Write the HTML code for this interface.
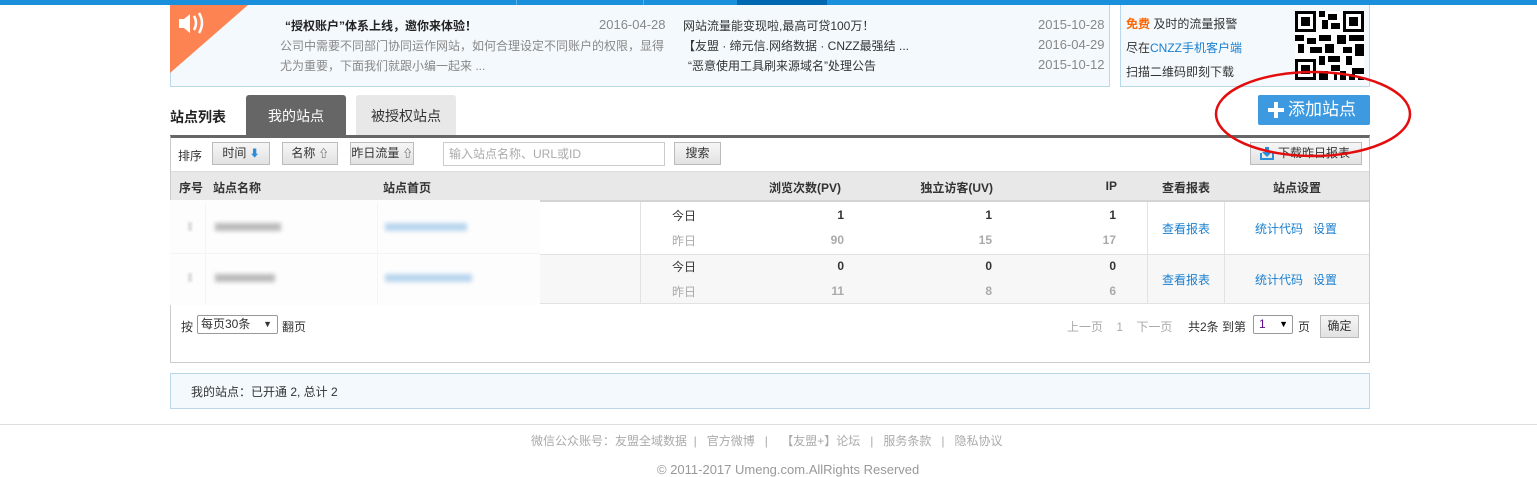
<!DOCTYPE html>
<html><head><meta charset="utf-8"><style>
*{margin:0;padding:0;box-sizing:border-box}
body{width:1537px;height:477px;position:relative;background:#fff;font-family:"Liberation Sans","Noto Sans CJK SC",sans-serif;font-size:12px;color:#333;overflow:hidden}
.a{position:absolute;white-space:nowrap}
.btn{position:absolute;white-space:nowrap;border:1px solid #bbb;background:linear-gradient(#f6f6f6,#e2e2e2);text-align:center;line-height:21px;font-size:12px;color:#333}
.g{color:#888}.b{color:#1a7fcf}.gr{color:#aaa}
.r{text-align:right}
.ar{font-size:10px}
</style></head><body>
<div class="a" style="left:0;top:0;width:1537px;height:5px;background:#1a8fdb"></div>
<div class="a" style="left:737px;top:0;width:90px;height:5px;background:#0068b0"></div>
<div class="a" style="left:516px;top:0;width:1px;height:5px;background:#5ab0e8"></div>
<div class="a" style="left:643px;top:0;width:1px;height:5px;background:#5ab0e8"></div>

<div class="a" style="left:170px;top:5px;width:940px;height:82px;background:#f3f9fd;border:1px solid #b9d8ea;border-top:none"></div>
<svg class="a" style="left:170px;top:5px" width="80" height="70"><polygon points="0,0 78,0 0,68" fill="#fd8452"/><path d="M9 14h5l6-5v19l-6-5H9z" fill="#fff"/><path d="M24 11q4 7 0 14M29 8q6 10 0 20" stroke="#fff" stroke-width="2.5" fill="none"/></svg>
<div class="a" style="left:285px;top:17px;font-weight:bold;color:#222">“授权账户”体系上线，邀你来体验！</div>
<div class="a g" style="left:599px;top:17px;font-size:13px">2016-04-28</div>
<div class="a g" style="left:280px;top:37px">公司中需要不同部门协同运作网站，如何合理设定不同账户的权限，显得</div>
<div class="a g" style="left:280px;top:57px">尤为重要，下面我们就跟小编一起来 ...</div>
<div class="a" style="left:683px;top:17px">网站流量能变现啦,最高可贷100万！</div>
<div class="a" style="left:683px;top:37px">【友盟 · 缔元信.网络数据 · CNZZ最强结 ...</div>
<div class="a" style="left:688px;top:57px">“恶意使用工具刷来源域名”处理公告</div>
<div class="a g" style="left:1038px;top:17px;font-size:13px">2015-10-28</div>
<div class="a g" style="left:1038px;top:37px;font-size:13px">2016-04-29</div>
<div class="a g" style="left:1038px;top:57px;font-size:13px">2015-10-12</div>

<div class="a" style="left:1120px;top:5px;width:250px;height:82px;background:#f3f9fd;border:1px solid #b9d8ea;border-top:none"></div>
<div class="a" style="left:1126px;top:15px"><span style="color:#f60;font-weight:bold">免费</span> 及时的流量报警</div>
<div class="a" style="left:1126px;top:39px">尽在<span class="b">CNZZ手机客户端</span></div>
<div class="a" style="left:1126px;top:63px">扫描二维码即刻下载</div>
<svg class="a" style="left:1295px;top:11px" width="69" height="69" viewBox="0 0 23 23" shape-rendering="crispEdges">
<rect width="23" height="23" fill="#fff"/>
<g fill="#000"><path d="M0 0h7v7H0zM16 0h7v7h-7zM0 16h7v7H0z"/></g>
<g fill="#fff"><path d="M1 1h5v5H1zM17 1h5v5h-5zM1 17h5v5H1z"/></g>
<g fill="#000"><path d="M2 2h3v3H2zM18 2h3v3h-3zM2 18h3v3H2zM8 0h2v2H8zM11 1h3v2h-3zM9 3h2v3H9zM12 4h3v2h-3zM8 8h4v2H8zM0 8h3v2H0zM4 9h3v2H4zM14 8h3v3h-3zM18 8h5v2h-5zM1 11h2v3H1zM5 12h4v2H5zM10 11h3v3h-3zM16 12h3v2h-3zM20 11h3v4h-3zM8 15h2v3H8zM11 15h4v2h-4zM17 15h2v3h-2zM12 18h3v2h-3zM8 20h3v3H8zM15 20h2v3h-2zM19 19h4v2h-4zM18 21h2v2h-2zM21 22h2v1h-2zM13 21h1v2h-1z"/></g>
</svg>

<div class="a" style="left:1258px;top:95px;width:112px;height:30px;background:#3d9ae0;border-radius:2px;color:#fff;font-size:17px;line-height:30px;padding-left:30px">添加站点</div>
<div class="a" style="left:1268px;top:102px;width:16px;height:16px"><div class="a" style="left:6px;top:0;width:4px;height:16px;background:#fff"></div><div class="a" style="left:0;top:6px;width:16px;height:4px;background:#fff"></div></div>

<div class="a" style="left:170px;top:107px;font-size:14px;font-weight:bold;color:#222">站点列表</div>
<div class="a" style="left:246px;top:95px;width:100px;height:40px;background:#666;border-radius:3px 3px 0 0;color:#fff;font-size:14px;text-align:center;line-height:42px">我的站点</div>
<div class="a" style="left:356px;top:95px;width:100px;height:40px;background:#e8e8e8;border-radius:3px 3px 0 0;color:#333;font-size:14px;text-align:center;line-height:42px">被授权站点</div>

<div class="a" style="left:170px;top:135px;width:1200px;height:228px;border:1px solid #ccc;border-top:3px solid #666"></div>
<div class="a" style="left:178px;top:147px">排序</div>
<div class="btn" style="left:212px;top:142px;width:58px;height:23px">时间 <span class="ar" style="color:#2a8fd8">⬇</span></div>
<div class="btn" style="left:282px;top:142px;width:56px;height:23px">名称 <span class="ar">⇧</span></div>
<div class="btn" style="left:350px;top:142px;width:64px;height:23px">昨日流量 <span class="ar">⇧</span></div>
<div class="a" style="left:443px;top:142px;width:222px;height:24px;border:1px solid #ccc;color:#aaa;line-height:22px;padding-left:5px">输入站点名称、URL或ID</div>
<div class="btn" style="left:674px;top:142px;width:47px;height:23px">搜索</div>
<div class="btn" style="left:1250px;top:142px;width:112px;height:23px;padding-left:16px">下载昨日报表</div>
<svg class="a" style="left:1260px;top:146px" width="14" height="14"><path d="M1 7v6h12V7" stroke="#2a8fd8" stroke-width="2" fill="none"/><path d="M5 1h4v5h3l-5 5-5-5h3z" fill="#2a8fd8"/></svg>

<div class="a" style="left:171px;top:171px;width:1198px;height:31px;background:#e8e8e8;border-top:1px solid #ddd;border-bottom:2px solid #d4d4d4"></div>
<div class="a" style="left:179px;top:179px;font-weight:bold">序号</div>
<div class="a" style="left:213px;top:179px;font-weight:bold">站点名称</div>
<div class="a" style="left:383px;top:179px;font-weight:bold">站点首页</div>
<div class="a r" style="left:741px;width:100px;top:179px;font-weight:bold">浏览次数(PV)</div>
<div class="a r" style="left:893px;width:100px;top:179px;font-weight:bold">独立访客(UV)</div>
<div class="a r" style="left:1017px;width:100px;top:179px;font-weight:bold">IP</div>
<div class="a" style="left:1162px;top:179px;font-weight:bold">查看报表</div>
<div class="a" style="left:1273px;top:179px;font-weight:bold">站点设置</div>

<div class="a" style="left:171px;top:254px;width:1198px;height:50px;background:#f7f7f7;border-top:1px solid #e2e2e2;border-bottom:1px solid #e2e2e2"></div>
<div class="a" style="left:640px;top:202px;width:1px;height:102px;background:#e2e2e2"></div>
<div class="a" style="left:1147px;top:202px;width:1px;height:102px;background:#e2e2e2"></div>
<div class="a" style="left:1224px;top:202px;width:1px;height:102px;background:#e2e2e2"></div>
<div class="a" style="left:170px;top:200px;width:370px;height:105px;background:#fdfdfd"></div>
<div class="a" style="left:205px;top:202px;width:1px;height:102px;background:#f5f5f5"></div>
<div class="a" style="left:377px;top:202px;width:1px;height:102px;background:#f5f5f5"></div>
<div class="a" style="left:170px;top:253px;width:370px;height:1px;background:#f4f4f4"></div>
<div class="a" style="left:188px;top:222px;width:4px;height:9px;background:#ddd;filter:blur(1px)"></div>
<div class="a" style="left:215px;top:223px;width:66px;height:8px;background:#bbb;filter:blur(2px)"></div>
<div class="a" style="left:385px;top:223px;width:82px;height:8px;background:#b9d6ee;filter:blur(2px)"></div>
<div class="a" style="left:188px;top:273px;width:4px;height:9px;background:#ddd;filter:blur(1px)"></div>
<div class="a" style="left:215px;top:274px;width:60px;height:8px;background:#bbb;filter:blur(2px)"></div>
<div class="a" style="left:385px;top:274px;width:87px;height:8px;background:#b9d6ee;filter:blur(2px)"></div>

<div class="a" style="left:672px;top:207px">今日</div>
<div class="a gr" style="left:672px;top:232px">昨日</div>
<div class="a" style="left:672px;top:258px">今日</div>
<div class="a gr" style="left:672px;top:283px">昨日</div>
<div class="a r" style="left:744px;width:100px;top:208px;font-weight:bold">1</div>
<div class="a r gr" style="left:744px;width:100px;top:233px;font-weight:bold">90</div>
<div class="a r" style="left:744px;width:100px;top:259px;font-weight:bold">0</div>
<div class="a r gr" style="left:744px;width:100px;top:284px;font-weight:bold">11</div>
<div class="a r" style="left:892px;width:100px;top:208px;font-weight:bold">1</div>
<div class="a r gr" style="left:892px;width:100px;top:233px;font-weight:bold">15</div>
<div class="a r" style="left:892px;width:100px;top:259px;font-weight:bold">0</div>
<div class="a r gr" style="left:892px;width:100px;top:284px;font-weight:bold">8</div>
<div class="a r" style="left:1016px;width:100px;top:208px;font-weight:bold">1</div>
<div class="a r gr" style="left:1016px;width:100px;top:233px;font-weight:bold">17</div>
<div class="a r" style="left:1016px;width:100px;top:259px;font-weight:bold">0</div>
<div class="a r gr" style="left:1016px;width:100px;top:284px;font-weight:bold">6</div>
<div class="a b" style="left:1162px;top:220px">查看报表</div>
<div class="a b" style="left:1162px;top:271px">查看报表</div>
<div class="a b" style="left:1255px;top:220px">统计代码&nbsp;&nbsp;&nbsp;设置</div>
<div class="a b" style="left:1255px;top:271px">统计代码&nbsp;&nbsp;&nbsp;设置</div>

<div class="a" style="left:181px;top:318px">按</div>
<div class="a" style="left:197px;top:315px;width:81px;height:19px;border:1px solid #999;border-radius:2px;line-height:17px;padding-left:3px">每页30条 <span style="position:absolute;right:5px;font-size:9px">▼</span></div>
<div class="a" style="left:282px;top:318px">翻页</div>
<div class="a gr" style="left:1067px;top:318px">上一页&nbsp;&nbsp;&nbsp;&nbsp;1&nbsp;&nbsp;&nbsp;&nbsp;下一页</div>
<div class="a" style="left:1188px;top:318px">共2条 到第</div>
<div class="a" style="left:1253px;top:315px;width:40px;height:19px;border:1px solid #999;border-radius:2px;line-height:17px;padding-left:5px;color:#5a0a8a">1 <span style="position:absolute;right:4px;font-size:9px;color:#000">▼</span></div>
<div class="a" style="left:1298px;top:318px">页</div>
<div class="btn" style="left:1320px;top:315px;width:39px;height:23px">确定</div>

<div class="a" style="left:170px;top:373px;width:1200px;height:36px;background:#f3f9fd;border:1px solid #b9d8ea"></div>
<div class="a" style="left:191px;top:383px">我的站点：已开通 2, 总计 2</div>

<div class="a" style="left:0;top:424px;width:1537px;height:1px;background:#ddd"></div>
<div class="a gr" style="left:531px;top:432px">微信公众账号：友盟全域数据&nbsp;&nbsp;|&nbsp;&nbsp;&nbsp;官方微博&nbsp;&nbsp;&nbsp;|&nbsp;&nbsp;&nbsp;&nbsp;【友盟+】论坛&nbsp;&nbsp;&nbsp;|&nbsp;&nbsp;&nbsp;服务条款&nbsp;&nbsp;&nbsp;|&nbsp;&nbsp;&nbsp;隐私协议</div>
<div class="a" style="left:657px;top:462px;color:#999;font-size:13px">© 2011-2017 Umeng.com.AllRights Reserved</div>

<svg class="a" style="left:1210px;top:66px" width="210" height="100"><ellipse cx="103" cy="48" rx="97" ry="42" fill="none" stroke="#e40d0d" stroke-width="2.5"/></svg>
</body></html>
